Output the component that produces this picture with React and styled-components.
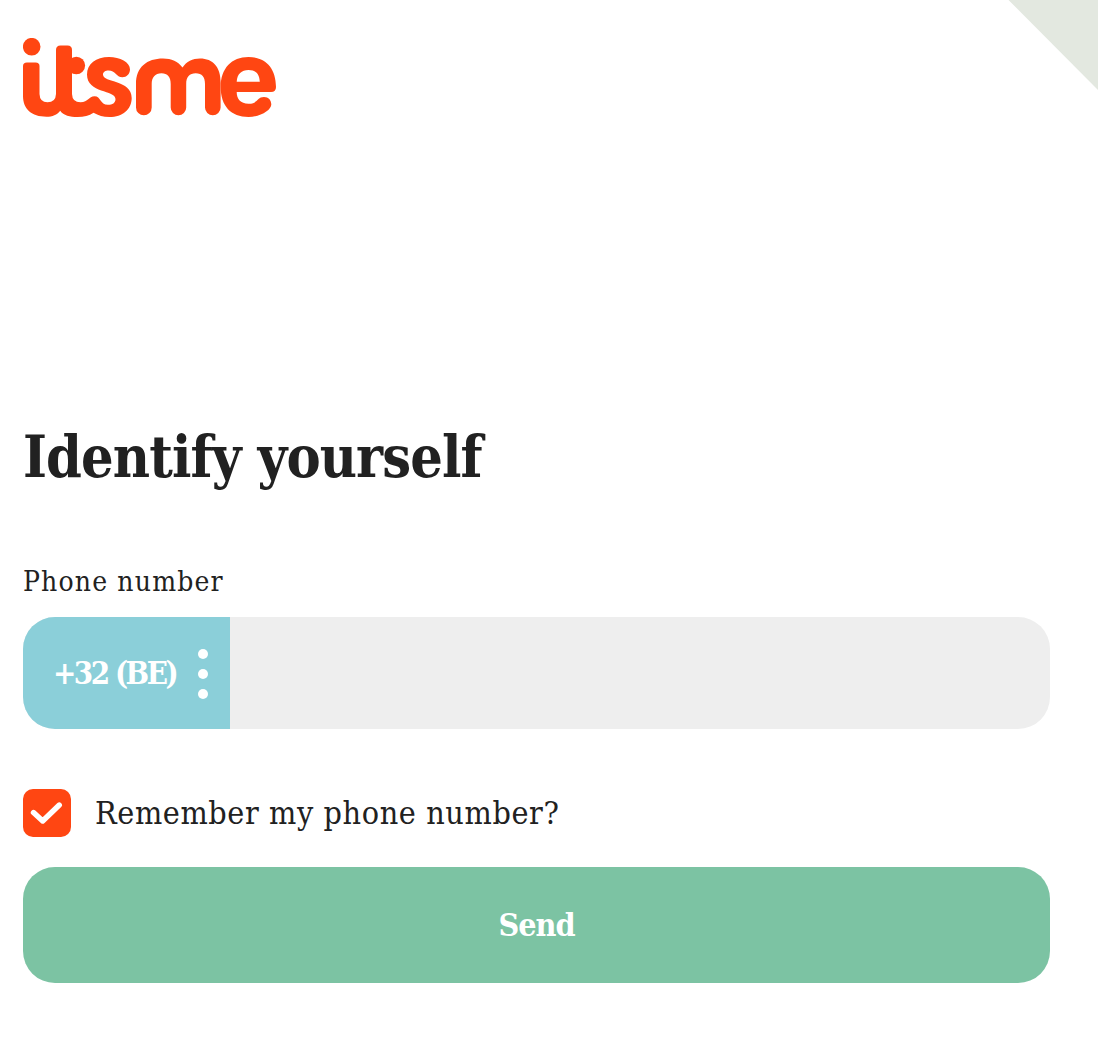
import React, { useState } from "react";
import styled, { createGlobalStyle } from "styled-components";

const Global = createGlobalStyle`
  *, *::before, *::after { box-sizing: border-box; }
  body {
    margin: 0;
    background: #fff;
    color: #212121;
    font-family: "Roboto Slab", "DejaVu Serif Condensed", "DejaVu Serif", serif;
    font-stretch: condensed;
  }
`;

const Page = styled.main`
  position: relative;
  display: flex;
  flex-direction: column;
  min-height: 1052px;
  padding: 38px 48px 0 23px;
  overflow: hidden;
`;

const Corner = styled.div`
  position: absolute;
  top: 0;
  right: 0;
  width: 90px;
  height: 90px;
  background: #e3e8e0;
  clip-path: polygon(0.5px 0, 100% 0, 100% 100%);
`;

const LogoSvg = styled.svg`
  display: block;
  width: 253px;
  height: 79px;
  fill: #ff4612;
`;

const Title = styled.h1`
  margin: 305px 0 0;
  font-size: 57px;
  line-height: 70px;
  font-weight: 700;
  letter-spacing: ${(p) => p.$tracking}px;
  white-space: nowrap;
`;

const Form = styled.form`
  display: flex;
  flex-direction: column;
  margin-top: 69px;
`;

const Label = styled.label`
  font-size: 28px;
  line-height: 41px;
  letter-spacing: ${(p) => p.$tracking}px;
`;

const PhoneField = styled.div`
  display: flex;
  height: 112px;
  margin-top: 15px;
  border-radius: 32px;
  background: #eee;
  overflow: hidden;
`;

const Prefix = styled.button`
  display: flex;
  align-items: center;
  justify-content: space-between;
  width: 207px;
  padding: 0 22px 0 30px;
  border: 0;
  background: #8bcfd9;
  color: #fff;
  font: inherit;
  font-size: 31px;
  font-weight: 700;
  white-space: nowrap;
  letter-spacing: ${(p) => p.$tracking}px;
`;

const Dots = styled.span`
  display: grid;
  gap: 10px;
  padding-top: 2px;
`;

const Dot = styled.i`
  width: 10px;
  height: 10px;
  border-radius: 50%;
  background: #fff;
`;

const NumberInput = styled.input`
  flex: 1;
  min-width: 0;
  padding: 0 32px;
  border: 0;
  outline: 0;
  background: transparent;
  font: inherit;
  font-size: 32px;
`;

const Remember = styled.div`
  display: flex;
  align-items: center;
  gap: 24px;
  height: 48px;
  margin-top: 60px;
`;

const Checkbox = styled.button`
  display: grid;
  place-items: center;
  width: 48px;
  height: 48px;
  padding: 0;
  border: 0;
  border-radius: 10px;
  background: #ff4612;
`;

const RememberText = styled.span`
  font-size: 32px;
  line-height: 48px;
  white-space: nowrap;
  letter-spacing: ${(p) => p.$tracking}px;
`;

const Submit = styled.button`
  height: 116px;
  margin-top: 30px;
  padding: 0;
  border: 0;
  border-radius: 32px;
  background: #7cc3a3;
  color: #fff;
  font: inherit;
  font-size: 32px;
  font-weight: 700;
  letter-spacing: ${(p) => p.$tracking}px;
`;

function Logo() {
  return (
    <LogoSvg viewBox="23 38 253 79" role="img" aria-label="itsme">
      <circle cx="31.7" cy="46.7" r="8.8" />
      <circle cx="76.3" cy="65.5" r="8.8" />
      <path d="M27 62.500H35.500Q39.500 62.500 39.500 66V94Q39.800 102.300 47.500 102.300Q55.600 102.300 56 94V50Q56 45.500 60.500 45.500H67.500Q72 45.500 72 50V94Q72.300 102.300 80.500 102.300C88.500 102.300 88.500 96.300 94.500 96.300C101 96.300 99.800 104.800 108 104.800C112.500 104.800 115.500 103 115.500 99C115.500 89.800 87 93.500 87 74.500C87 64 96 57 109 57C120 57 130 62 130 69.500C130 74 126.500 77.200 122.500 77.200C116 77.200 115.500 70.500 108.500 70.500C105.500 70.500 103 72 103 74.500C103 83 131.700 79.500 131.700 98C131.700 109.500 122.500 117 109.500 117C103 117 98.500 115.500 93.500 112.700C89 115.700 84 117 77.500 117C70 117 63.500 115.500 60.200 110.700C57 115 52.500 116.700 46.500 116.700C31.500 116.700 23 109 23 96V66Q23 62.500 27 62.500Z" />
      <path d="M136 107.500V84C136 67 147 58.500 163 58.500C171.500 58.500 178 61.500 182.500 67.500C186.500 61.500 192.500 58.500 200 58.500C213 58.500 220.600 67 220.600 82V107.500A7.800 7.800 0 0 1 205 107.500V84C205 77 202 73.300 195.700 73.300C189.500 73.300 186.200 77 186.200 84V107.500A7.750 7.750 0 0 1 170.700 107.500V84C170.700 77 167.500 73.300 161.500 73.300C155 73.300 151.700 77.500 151.700 84V107.500A7.850 7.850 0 0 1 136 107.500Z" />
      <path fillRule="evenodd" d="M248.500 57C265 57 276 67.500 276 87Q276 92 271 92H236.700C236.700 99 240.500 103.700 248.500 103.700C258 103.700 257 97 264 97C268.500 97 271.300 100 271.300 104.500C271.300 110 260.500 117 248.500 117C231 117 220.700 106 220.700 87C220.700 68.500 231.500 57 248.500 57ZM236.700 81.700H259.800C259.300 73.500 255.500 70 248.500 70C241.500 70 237.200 74 236.700 81.700Z" />
    </LogoSvg>
  );
}

function CheckIcon() {
  return (
    <svg width="48" height="48" viewBox="0 0 48 48" fill="none" stroke="#fff" strokeWidth="5.4" strokeLinecap="round" strokeLinejoin="round">
      <path d="M10.500 23.500L19.700 32L36.300 16" />
    </svg>
  );
}

export default function App() {
  const [checked, setChecked] = useState(true);
  return (
    <>
      <Global />
      <Page>
        <Corner />
        <Logo />
        <Title $tracking={-0.9}>Identify yourself</Title>
        <Form onSubmit={(e) => e.preventDefault()}>
          <Label htmlFor="phone" $tracking={1.15}>Phone number</Label>
          <PhoneField>
            <Prefix type="button" $tracking={-2.5}>
              <span>+32 (BE)</span>
              <Dots><Dot /><Dot /><Dot /></Dots>
            </Prefix>
            <NumberInput id="phone" type="tel" />
          </PhoneField>
          <Remember>
            <Checkbox type="button" role="checkbox" aria-checked={checked} aria-label="Remember my phone number?" onClick={() => setChecked(!checked)}>
              {checked && <CheckIcon />}
            </Checkbox>
            <RememberText $tracking={0.6}>Remember my phone number?</RememberText>
          </Remember>
          <Submit type="submit" $tracking={-1}>Send</Submit>
        </Form>
      </Page>
    </>
  );
}
